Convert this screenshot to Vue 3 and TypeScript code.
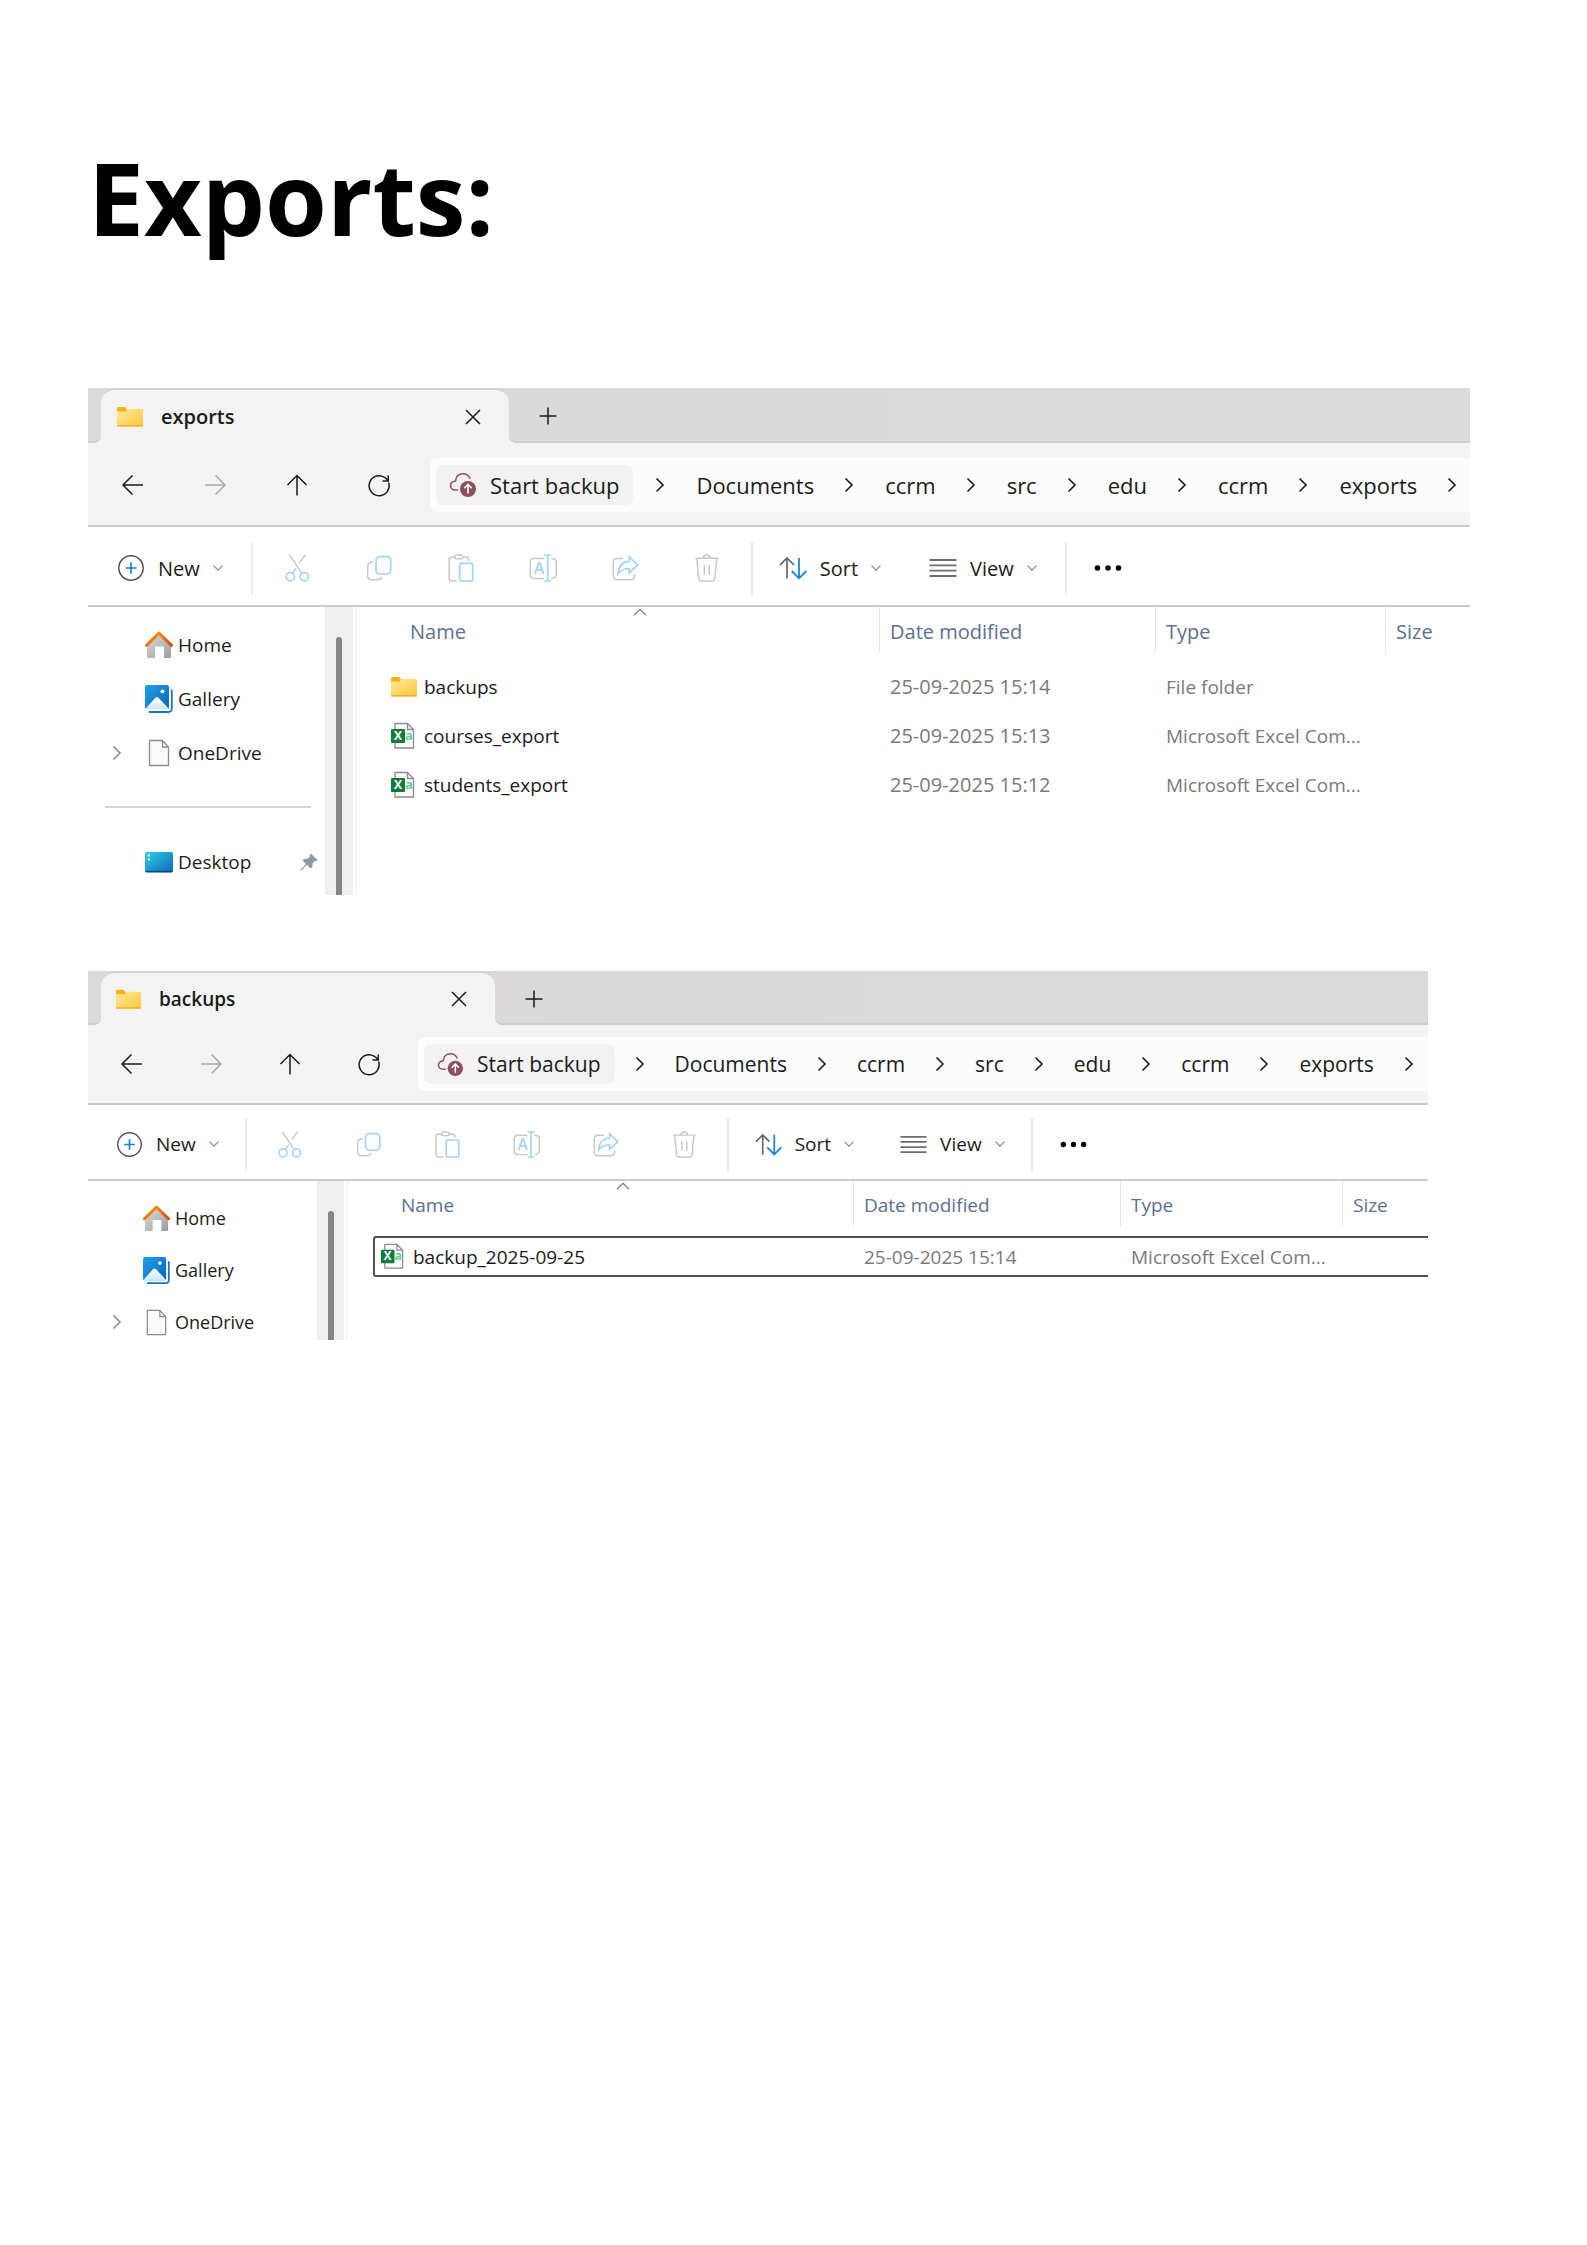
<script setup lang="ts">
interface Place {
  label: string
  icon: string
  expandable?: boolean
  pinned?: boolean
  separated?: boolean
}

interface Entry {
  name: string
  icon: string
  modified: string
  type: string
  selected?: boolean
}

interface ExplorerWindow {
  id: string
  title: string
  compact: boolean
  places: Place[]
  entries: Entry[]
}

const crumbs: string[] = ['Documents', 'ccrm', 'src', 'edu', 'ccrm', 'exports']

const navigation = [
  { icon: 'back', label: 'Back', disabled: false },
  { icon: 'forward', label: 'Forward', disabled: true },
  { icon: 'up', label: 'Up', disabled: false },
  { icon: 'refresh', label: 'Refresh', disabled: false },
]

const fileActions = [
  { icon: 'cut', label: 'Cut' },
  { icon: 'copy', label: 'Copy' },
  { icon: 'paste', label: 'Paste' },
  { icon: 'rename', label: 'Rename' },
  { icon: 'share', label: 'Share' },
  { icon: 'trash', label: 'Delete' },
]

const basePlaces: Place[] = [
  { label: 'Home', icon: 'home' },
  { label: 'Gallery', icon: 'gallery' },
  { label: 'OneDrive', icon: 'file', expandable: true },
]

const windows: ExplorerWindow[] = [
  {
    id: 'exports',
    title: 'exports',
    compact: false,
    places: [...basePlaces, { label: 'Desktop', icon: 'desktop', pinned: true, separated: true }],
    entries: [
      { name: 'backups', icon: 'folder', modified: '25-09-2025 15:14', type: 'File folder' },
      { name: 'courses_export', icon: 'csv', modified: '25-09-2025 15:13', type: 'Microsoft Excel Com...' },
      { name: 'students_export', icon: 'csv', modified: '25-09-2025 15:12', type: 'Microsoft Excel Com...' },
    ],
  },
  {
    id: 'backups',
    title: 'backups',
    compact: true,
    places: basePlaces,
    entries: [
      {
        name: 'backup_2025-09-25',
        icon: 'csv',
        modified: '25-09-2025 15:14',
        type: 'Microsoft Excel Com...',
        selected: true,
      },
    ],
  },
]
</script>

<template>
  <main class="page">
    <svg class="sprite" aria-hidden="true">
      <defs>
        <linearGradient id="g-folder" x1="0" y1="0" x2="1" y2="1">
          <stop offset="0" stop-color="#ffe9a0" />
          <stop offset="1" stop-color="#fdc735" />
        </linearGradient>
        <linearGradient id="g-roof" x1="0" y1="0" x2="1" y2="0">
          <stop offset="0" stop-color="#e8720c" />
          <stop offset="0.5" stop-color="#f08a12" />
          <stop offset="1" stop-color="#d64a10" />
        </linearGradient>
        <linearGradient id="g-wall" x1="0" y1="0" x2="1" y2="1">
          <stop offset="0" stop-color="#dcdcdc" />
          <stop offset="1" stop-color="#9c9c9c" />
        </linearGradient>
        <linearGradient id="g-photo" x1="0" y1="0" x2="1" y2="1">
          <stop offset="0" stop-color="#1fa3ea" />
          <stop offset="1" stop-color="#0b62b8" />
        </linearGradient>
        <linearGradient id="g-hill" x1="0" y1="0" x2="0" y2="1">
          <stop offset="0" stop-color="#ffffff" />
          <stop offset="1" stop-color="#cfe6fa" />
        </linearGradient>
        <linearGradient id="g-desk" x1="0" y1="0" x2="1" y2="1">
          <stop offset="0" stop-color="#2fd0e0" />
          <stop offset="1" stop-color="#0c66bd" />
        </linearGradient>
      </defs>
      <symbol id="i-folder" viewBox="0 0 28 28">
        <path d="M1 5.500Q1 4 2.500 4H9l2 2.500V11H1Z" fill="#f9b013" />
        <path d="M1 8.500H10L11.500 6H25.500Q27 6 27 7.500V22q0 1.500-1.500 1.500h-23Q1 23.500 1 22Z" fill="url(#g-folder)" />
        <path d="M1.300 22.800h25.400" stroke="#e9a526" stroke-width="1.200" />
      </symbol>
      <symbol id="i-close" viewBox="0 0 16 16">
        <path d="M1 1l14 14M15 1L1 15" class="thin" />
      </symbol>
      <symbol id="i-plus" viewBox="0 0 18 18">
        <path d="M9 .500v17M.500 9h17" class="thin" />
      </symbol>
      <symbol id="i-back" viewBox="0 0 24 24">
        <path d="M22 12H2.500M11.500 2.500L2 12l9.500 9.500" class="thin" />
      </symbol>
      <symbol id="i-forward" viewBox="0 0 24 24">
        <path d="M2 12h19.500M12.500 2.500L22 12l-9.500 9.500" class="thin" />
      </symbol>
      <symbol id="i-up" viewBox="0 0 24 24">
        <path d="M12 22.500V3M2.500 12L12 2.500 21.500 12" class="thin" />
      </symbol>
      <symbol id="i-refresh" viewBox="0 0 24 24">
        <path d="M21.600 9.500A10 10 0 1 1 18.500 5L21 7.500M21.300 2.500V8H15.500" class="thin" />
      </symbol>
      <symbol id="i-cloud" viewBox="0 0 28 28">
        <path d="M8.500 19H6.500C3.500 19 1.500 17 1.500 14.500S3.500 10.500 6.500 10C7 5.500 10 2.800 14 2.800c3.200 0 5.600 1.600 6.800 4.400" fill="none" stroke="#8c5460" stroke-width="1.600" stroke-linecap="round" />
        <circle cx="19" cy="18" r="8" fill="#8a505d" />
        <path d="M19 22.500V14M15.300 17.200L19 13.500l3.700 3.700" fill="none" stroke="#fff" stroke-width="1.600" />
      </symbol>
      <symbol id="i-chevron" viewBox="0 0 10 16">
        <path d="M1.500 1.500L8 8l-6.500 6.500" fill="none" stroke="currentColor" stroke-width="1.600" />
      </symbol>
      <symbol id="i-down" viewBox="0 0 10 6">
        <path d="M.500 .700L5 5.200 9.500 .700" fill="none" stroke="currentColor" stroke-width="1.200" />
      </symbol>
      <symbol id="i-caret" viewBox="0 0 14 8">
        <path d="M1 7.200L7 1.200l6 6" fill="none" stroke="currentColor" stroke-width="1.300" />
      </symbol>
      <symbol id="i-new" viewBox="0 0 28 28">
        <circle cx="14" cy="14" r="12.200" fill="none" stroke="#555" stroke-width="1.500" />
        <path d="M14 8.500v11M8.500 14h11" stroke="#1380d8" stroke-width="1.700" />
      </symbol>
      <symbol id="i-cut" viewBox="0 0 28 28">
        <path d="M6.300 .700L18.800 19M22.300 .700L16.500 9M13.200 14l-3.600 5" class="grey" />
        <circle cx="7.300" cy="22.700" r="4.100" class="blue" />
        <circle cx="21.300" cy="22.700" r="4.100" class="blue" />
      </symbol>
      <symbol id="i-copy" viewBox="0 0 28 28">
        <path d="M8.500 7.800C4.800 7.800 2.700 10 2.700 13v8.500c0 2.700 1.800 4.200 4.700 4.200h4.800c2.500 0 4-.900 4.500-2.700" class="grey" />
        <rect x="11" y="2.700" width="14.700" height="17.300" rx="3.800" class="blue" />
      </symbol>
      <symbol id="i-paste" viewBox="0 0 28 28">
        <path d="M7.700 3.300H4.200Q2.200 3.300 2.200 5.300V25q0 2 2 2h5.500M15.700 3.300h3.600q2.400 0 2.400 2.400v1.200" class="grey" />
        <rect x="7.700" y="1" width="8" height="3.800" rx="1.900" class="grey" />
        <rect x="12.700" y="9.300" width="13" height="17.700" rx="1.800" class="blue" />
      </symbol>
      <symbol id="i-rename" viewBox="0 0 28 28">
        <path d="M15 4.400H5.200Q1.300 4.400 1.300 8.300v12.300q0 3.900 3.900 3.900H15M22.300 4.400q5 0 5 4.400v11.300q0 4.400-5 4.400" class="grey" />
        <path d="M18.700 1v26M15.200 1h7M15.200 27h7" class="blue" />
      </symbol>
      <symbol id="i-share" viewBox="0 0 28 28">
        <path d="M12.300 4.400H6.500Q2.300 4.400 2.300 8.600v12.900q0 4.200 4.200 4.200h12.900q4.200 0 4.200-4.200v-1.500" class="grey" />
        <path d="M18.300 2.800L26.700 11l-8.400 7.700v-4.200C13 14.500 9.700 15.700 7 19.700 7.500 12.500 11 7.800 18.300 7.300Z" class="blue" />
      </symbol>
      <symbol id="i-trash" viewBox="0 0 28 28">
        <path d="M2 4.300h23.600M10.200 4.300C10.500 0 17 0 17.300 4.300M3.800 4.500L5.700 24.500q.200 2.500 2.700 2.500h10.700q2.500 0 2.700-2.500L23.800 4.500M11.300 11v9.700M16.300 11v9.700" class="grey" />
      </symbol>
      <symbol id="i-sort" viewBox="0 0 28 28">
        <path d="M8 24.500V4.500M1 11l7-7 7 7" fill="none" stroke="#666" stroke-width="1.700" />
        <path d="M20 4v20M12.700 17l7.300 7.300 7.300-7.300" fill="none" stroke="#1a84dc" stroke-width="1.800" />
      </symbol>
      <symbol id="i-view" viewBox="0 0 28 28">
        <path d="M.500 6h27M.500 11.300h27M.500 16.700h27M.500 22h27" stroke="#6e6e6e" stroke-width="1.800" />
      </symbol>
      <symbol id="i-more" viewBox="0 0 28 28">
        <circle cx="3.500" cy="14" r="2.800" /><circle cx="14" cy="14" r="2.800" /><circle cx="24.500" cy="14" r="2.800" />
      </symbol>
      <symbol id="i-home" viewBox="0 0 28 28">
        <path d="M2 12.500L14 2.500 26 12.500V26q0 1-1 1h-6V15.500H10V27H3q-1 0-1-1Z" fill="url(#g-wall)" />
        <path d="M1.500 14.300L14 2.200l12.500 12.100" fill="none" stroke="url(#g-roof)" stroke-width="3" stroke-linejoin="round" stroke-linecap="round" />
      </symbol>
      <symbol id="i-gallery" viewBox="0 0 28 28">
        <path d="M26.800 4.500V23.500q0 3.500-3.500 3.500H4" fill="none" stroke="#1a73c2" stroke-width="1.800" />
        <rect x="0" y="0" width="24" height="24" rx="2" fill="url(#g-photo)" />
        <path d="M1 23L10.500 12.700q1.500-1.400 3 0L23.300 23Q22.800 24 22 24H2Q1.300 24 1 23Z" fill="url(#g-hill)" />
        <circle cx="17.500" cy="6.300" r="1.900" fill="#fff" />
      </symbol>
      <symbol id="i-file" viewBox="0 0 28 28">
        <path d="M4.500 1.500h13l6 6.500v18.500h-19Z" fill="#fafafa" stroke="#8c8c8c" stroke-width="1.300" />
        <path d="M17.500 1.500V8h6" fill="none" stroke="#8c8c8c" stroke-width="1.300" />
      </symbol>
      <symbol id="i-desktop" viewBox="0 0 28 28">
        <rect x="0" y="4" width="28" height="20.500" rx="1.800" fill="url(#g-desk)" />
        <path d="M.500 23.500h27" stroke="#0a4a86" stroke-width="1.500" />
        <path d="M2.800 6.500h2v2h-2zM2.800 10.500h2v2h-2z" fill="#fff" />
      </symbol>
      <symbol id="i-csv" viewBox="0 0 28 28">
        <path d="M5 1.500h12.500l6 6V26H5Z" fill="#fafafa" stroke="#8c8c8c" stroke-width="1.300" />
        <path d="M17.500 1.500v6h6" fill="none" stroke="#8c8c8c" stroke-width="1.300" />
        <rect x="1" y="7" width="14" height="14" rx="1" fill="#147a42" />
      </symbol>
      <symbol id="i-pin" viewBox="0 0 18 18">
        <path d="M10.800 .500L17.500 7l-1.200 1.200-1.300-.200-2.500 2.500-.200 3.700L10.800 15.500 7 11.800 1.500 17.300.500 17.500.700 16.500 6 11 2.500 7.300 4 6l3.500-.300L10 3.200 9.700 1.700Z" fill="#8e9aa3" />
      </symbol>
    </svg>

    <h1 class="heading">Exports:</h1>

    <section
      v-for="win in windows"
      :key="win.id"
      class="window"
      :class="{ compact: win.compact }"
      :aria-label="win.title"
    >
      <header class="tabs">
        <span class="strip strip-start"></span>
        <div class="tab-slot">
          <div class="tab">
            <svg class="icon"><use href="#i-folder" /></svg>
            <span class="tab-title">{{ win.title }}</span>
            <button class="close" type="button" aria-label="Close tab">
              <svg class="icon-close"><use href="#i-close" /></svg>
            </button>
          </div>
        </div>
        <div class="strip strip-end">
          <button type="button" aria-label="New tab">
            <svg class="icon-plus"><use href="#i-plus" /></svg>
          </button>
        </div>
      </header>

      <div class="navbar">
        <button
          v-for="item in navigation"
          :key="item.icon"
          class="cell"
          type="button"
          :aria-label="item.label"
          :disabled="item.disabled"
        >
          <svg class="icon-nav"><use :href="`#i-${item.icon}`" /></svg>
        </button>
        <nav class="address" aria-label="Path">
          <button class="backup" type="button">
            <svg class="icon"><use href="#i-cloud" /></svg>
            <span>Start backup</span>
          </button>
          <svg class="icon-chevron"><use href="#i-chevron" /></svg>
          <template v-for="(crumb, index) in crumbs" :key="index">
            <a class="crumb" href="#">{{ crumb }}</a>
            <svg class="icon-chevron"><use href="#i-chevron" /></svg>
          </template>
        </nav>
      </div>

      <div class="toolbar">
        <button class="command command-new" type="button">
          <svg class="icon"><use href="#i-new" /></svg>
          <span>New</span>
          <svg class="icon-down"><use href="#i-down" /></svg>
        </button>
        <span class="divider"></span>
        <button
          v-for="action in fileActions"
          :key="action.icon"
          class="cell"
          type="button"
          :aria-label="action.label"
          disabled
        >
          <svg class="icon" viewBox="0 0 28 28">
            <use :href="`#i-${action.icon}`" />
            <text v-if="action.icon === 'rename'" x="10" y="20" text-anchor="middle" class="letter">A</text>
          </svg>
        </button>
        <span class="divider"></span>
        <button class="command command-sort" type="button">
          <svg class="icon"><use href="#i-sort" /></svg>
          <span>Sort</span>
          <svg class="icon-down"><use href="#i-down" /></svg>
        </button>
        <button class="command command-view" type="button">
          <svg class="icon"><use href="#i-view" /></svg>
          <span>View</span>
          <svg class="icon-down"><use href="#i-down" /></svg>
        </button>
        <span class="divider"></span>
        <button class="command more" type="button" aria-label="See more">
          <svg class="icon"><use href="#i-more" /></svg>
        </button>
      </div>

      <div class="body">
        <aside class="sidebar">
          <ul class="places">
            <li v-for="place in win.places" :key="place.label" :class="{ separated: place.separated }">
              <a class="place" href="#">
                <span class="expander">
                  <svg v-if="place.expandable" class="icon-chevron"><use href="#i-chevron" /></svg>
                </span>
                <svg class="icon"><use :href="`#i-${place.icon}`" /></svg>
                <span class="place-name">{{ place.label }}</span>
                <svg v-if="place.pinned" class="icon-pin"><use href="#i-pin" /></svg>
              </a>
            </li>
          </ul>
          <div class="track"><span class="thumb"></span></div>
        </aside>

        <div class="listing">
          <svg class="caret"><use href="#i-caret" /></svg>
          <table>
            <colgroup>
              <col class="col-name" />
              <col class="col-date" />
              <col class="col-type" />
              <col />
            </colgroup>
            <thead>
              <tr>
                <th scope="col"><span class="head head-name">Name</span></th>
                <th scope="col"><span class="head">Date modified</span></th>
                <th scope="col"><span class="head">Type</span></th>
                <th scope="col"><span class="head">Size</span></th>
              </tr>
            </thead>
            <tbody>
              <tr v-for="entry in win.entries" :key="entry.name" :class="{ selected: entry.selected }">
                <td>
                  <span class="value value-name">
                    <svg class="icon" viewBox="0 0 28 28">
                      <use :href="`#i-${entry.icon}`" />
                      <template v-if="entry.icon === 'csv'">
                        <text x="8" y="18" text-anchor="middle" class="csv-x">X</text>
                        <text x="19" y="18" text-anchor="middle" class="csv-a">a</text>
                      </template>
                    </svg>
                    {{ entry.name }}
                  </span>
                </td>
                <td><span class="value value-date">{{ entry.modified }}</span></td>
                <td><span class="value">{{ entry.type }}</span></td>
                <td><span class="value"></span></td>
              </tr>
            </tbody>
          </table>
        </div>
      </div>
    </section>
  </main>
</template>

<style>
body {
  margin: 0;
  background: #fff;
}
</style>

<style scoped>
.page {
  padding: 127px 0 80px 88px;
  font-family: "Open Sans", "Noto Sans", sans-serif;
  color: #1b1b1b;
}

.sprite {
  position: absolute;
  width: 0;
  height: 0;
}

.heading {
  margin: 0 0 121px;
  font-size: 100px;
  line-height: 140px;
  font-weight: 700;
  color: #000;
}

.window {
  --text: 20px;
  --small: 19px;
  --place-text: 19px;
  --path: 22px;
  --icon: 28px;
  --cell: 82px;
  --tab-height: 55px;
  --tab-width: 408px;
  --nav-height: 84px;
  --bar-height: 80px;
  --row: 49px;
  --value: 41px;
  --place: 54px;
  --indent: 57px;
  --side: 237px;
  --track: 28px;
  --name: 522px;
  --date: 276px;
  --type: 230px;
  margin: 0 117px 76px 0;
  overflow: hidden;
  font-size: var(--text);
  background: #fff;
}

.window.compact {
  --text: 19px;
  --place-text: 18px;
  --path: 21px;
  --icon: 27px;
  --cell: 79px;
  --tab-height: 54px;
  --tab-width: 394px;
  --nav-height: 80px;
  --bar-height: 76px;
  --row: 47px;
  --place: 52px;
  --indent: 55px;
  --side: 229px;
  --track: 27px;
  --name: 505px;
  --date: 267px;
  --type: 222px;
  margin-right: 159px;
}

button {
  margin: 0;
  padding: 0;
  border: 0;
  background: none;
  font: inherit;
  color: inherit;
}

a {
  color: inherit;
  text-decoration: none;
}

svg {
  display: block;
  flex: none;
}

.thin {
  fill: none;
  stroke: currentColor;
  stroke-width: 1.5;
}

.grey {
  fill: none;
  stroke: #c8c8c8;
  stroke-width: 1.5;
}

.blue {
  fill: none;
  stroke: #a5d3f5;
  stroke-width: 1.7;
}

.letter {
  fill: #a5d3f5;
  font: 600 16px "Open Sans", sans-serif;
}

.csv-x {
  fill: #fff;
  font: 700 12px "Open Sans", sans-serif;
}

.csv-a {
  fill: #5fd39b;
  font: 700 13px "Open Sans", sans-serif;
}

.icon {
  width: var(--icon);
  height: var(--icon);
}

.icon-close {
  width: 16px;
  height: 16px;
}

.icon-plus {
  width: 18px;
  height: 18px;
}

.icon-nav {
  width: 24px;
  height: 24px;
}

.icon-chevron {
  width: 10px;
  height: 16px;
}

.icon-down {
  width: 10px;
  height: 6px;
  color: #8a8a8a;
}

.icon-pin {
  width: 18px;
  height: 18px;
}

.tabs {
  display: flex;
  height: var(--tab-height);
  background: #f3f3f3;
}

.strip {
  box-sizing: border-box;
  display: flex;
  align-items: center;
  background: #dadada;
  border-bottom: 2px solid #cdcdcd;
}

.strip-start {
  width: 13px;
  border-bottom-right-radius: 7px;
}

.strip-end {
  flex: 1;
  padding: 3px 0 0 30px;
  background: linear-gradient(90deg, #dbd9d9, #dadada 40%);
  border-bottom-left-radius: 7px;
}

.tab-slot {
  width: var(--tab-width);
  background: linear-gradient(#dadada 20px, #f3f3f3 20px);
}

.tab {
  box-sizing: border-box;
  display: flex;
  align-items: center;
  height: 100%;
  padding: 0 28px 0 15px;
  border-top: 2px solid #d3d3d3;
  border-radius: 14px 14px 0 0;
  background: #f3f3f3;
}

.compact .tab {
  padding-left: 14px;
}

.tab-title {
  flex: 1;
  padding-left: 17px;
  font-weight: 600;
}

.navbar {
  box-sizing: border-box;
  display: flex;
  align-items: center;
  height: var(--nav-height);
  padding: 2px 0 0 4px;
  background: #f3f3f3;
  border-bottom: 2px solid #cbcbcb;
}

.compact .navbar {
  padding-top: 0;
}

.cell {
  display: flex;
  flex: none;
  justify-content: center;
  width: var(--cell);
}

.navbar .cell:disabled {
  color: #a8a8a8;
}

.address {
  box-sizing: border-box;
  display: flex;
  flex: 1;
  align-items: center;
  min-width: 0;
  height: 54px;
  margin-left: 10px;
  padding-left: 6px;
  overflow: hidden;
  font-size: var(--path);
  white-space: nowrap;
  background: #fcfcfc;
  border-radius: 7px 0 0 7px;
}

.backup {
  display: flex;
  align-items: center;
  gap: 13px;
  height: 40px;
  margin-right: 22px;
  padding: 0 14px 0 13px;
  border-radius: 7px;
  background: #f2f2f2;
}

.crumb {
  padding: 0 30px 0 31px;
}

.compact .backup {
  margin-right: 20px;
}

.compact .crumb {
  padding-left: 30px;
}

.toolbar {
  box-sizing: border-box;
  display: flex;
  align-items: center;
  height: var(--bar-height);
  padding: 4px 0 0 29px;
  border-bottom: 2px solid #cbcbcb;
}

.divider {
  flex: none;
  width: 2px;
  height: 53px;
  margin-right: 3px;
  background: #ececec;
}

.cell + .divider {
  margin-left: 3px;
}

.command {
  display: flex;
  align-items: center;
  gap: 13px;
}

.command-new {
  margin-right: 28px;
}

.command-sort {
  margin: 0 48px 0 23px;
}

.command-view {
  margin-right: 28px;
}

.more {
  margin-left: 24px;
}

.compact .toolbar {
  padding-left: 28px;
}

.compact .command-new,
.compact .command-view {
  margin-right: 26px;
}

.compact .command-sort {
  margin-right: 46px;
}

.body {
  display: flex;
}

.compact .body {
  max-height: 159px;
}

.sidebar {
  display: flex;
  flex: none;
}

.places {
  width: var(--side);
  margin: 0;
  padding: 11px 0 6px;
  box-sizing: border-box;
  font-size: var(--place-text);
  list-style: none;
}

.place {
  display: flex;
  align-items: center;
  height: var(--place);
  padding-right: 7px;
}

.expander {
  width: var(--indent);
  padding-left: 24px;
  box-sizing: border-box;
  color: #8c8c8c;
}

.place-name {
  flex: 1;
  padding-left: 5px;
}

.separated::before {
  content: "";
  display: block;
  height: 2px;
  margin: 26px 14px 27px 17px;
  background: #d5d5d5;
}

.track {
  width: var(--track);
  padding: 30px 0 0 11px;
  box-sizing: border-box;
  background: #efefef;
}

.thumb {
  display: block;
  width: 6px;
  height: 100%;
  border-radius: 3px 3px 0 0;
  background: #858585;
}

.listing {
  position: relative;
  flex: 1;
  min-width: 0;
  margin-left: 2px;
  border-left: 2px solid #f6f6f6;
}

.caret {
  position: absolute;
  top: 1px;
  left: calc(var(--name) / 2 + 15px);
  width: 14px;
  height: 8px;
  color: #858585;
}

table {
  width: 100%;
  table-layout: fixed;
  border-collapse: collapse;
}

.col-name {
  width: var(--name);
}

.col-date {
  width: var(--date);
}

.col-type {
  width: var(--type);
}

th,
td {
  padding: 0;
  text-align: left;
  font-weight: 400;
  white-space: nowrap;
}

.head {
  display: flex;
  align-items: center;
  height: 46px;
  margin-bottom: 9px;
  padding: 2px 0 0 10px;
  box-sizing: border-box;
  color: #5c718f;
  border-left: 1px solid #e5e5e5;
}

.compact .head {
  height: 45px;
  margin-bottom: 10px;
}

.head-name {
  padding-left: 53px;
  border-left: 0;
}

td {
  height: var(--row);
}

.value {
  display: flex;
  align-items: center;
  height: var(--value);
  padding-left: 11px;
  box-sizing: border-box;
  font-size: var(--small);
  color: #7a7a7a;
  border: 0 solid #525252;
}

.value-date {
  font-size: 20px;
}

.compact .value-date {
  font-size: 19px;
}

.value-name {
  gap: 6px;
  margin-left: 17px;
  padding-left: 16px;
  color: #1b1b1b;
}

.selected td {
  height: auto;
}

.selected .value {
  border-width: 2px 0;
}

.selected .value-name {
  margin-left: 25px;
  padding-left: 5px;
  border-left-width: 2px;
  border-radius: 3px 0 0 3px;
}
</style>
